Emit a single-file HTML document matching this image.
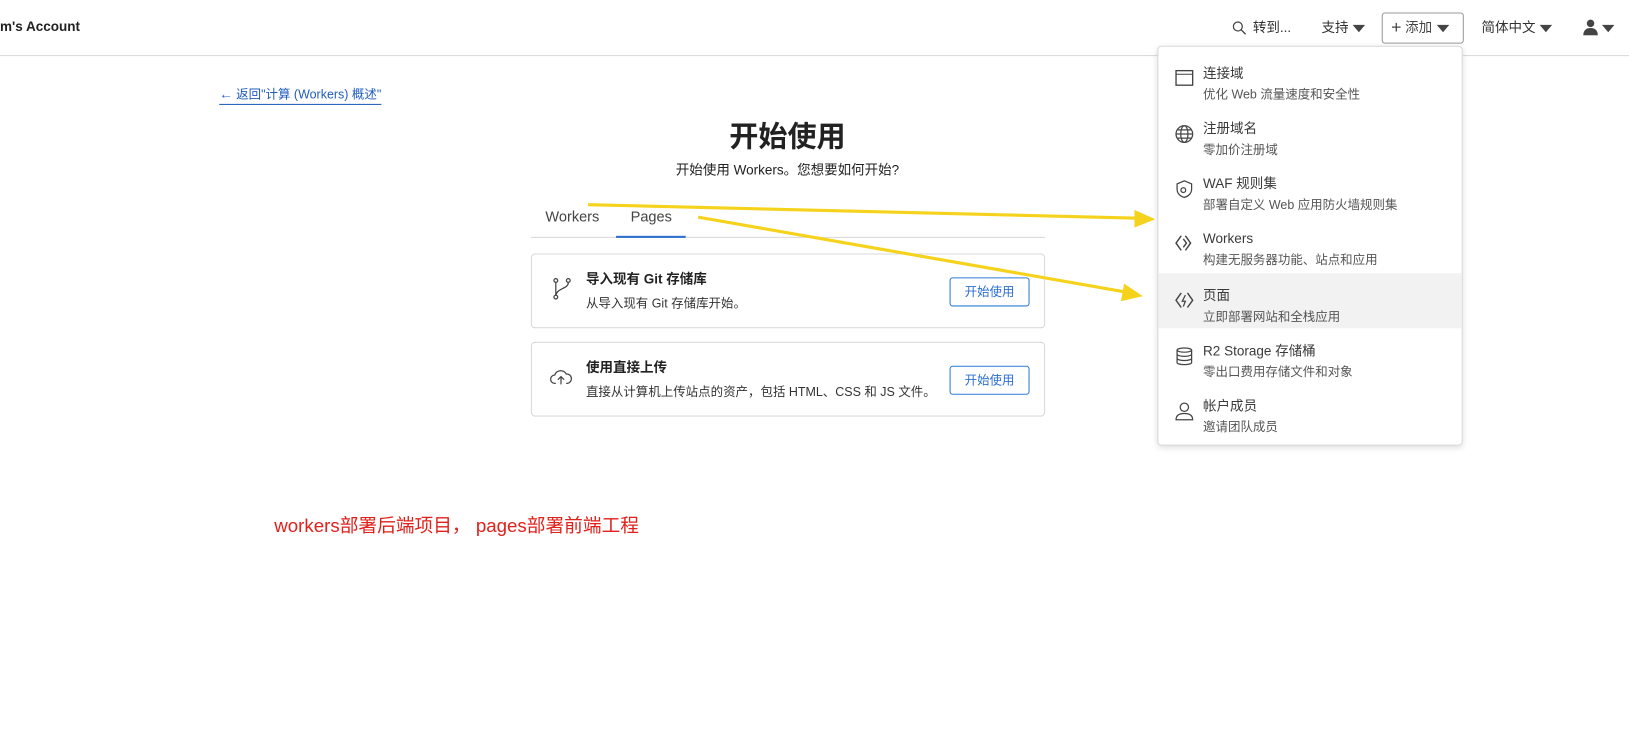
<!DOCTYPE html><html><head><meta charset="utf-8"><style>
*{margin:0;padding:0;box-sizing:border-box}
body{width:1629px;height:730px;background:#fff;font-family:"Liberation Sans","Noto Sans CJK SC",sans-serif;color:#313131;position:relative;overflow:hidden;font-size:13px}
#w{position:absolute;left:0;top:0;width:1568px;height:703px;transform:scale(1.0389);transform-origin:0 0}
.a{position:absolute;white-space:nowrap;line-height:1.2}
.hdr{position:absolute;left:0;top:0;width:1568px;height:54px;border-bottom:1px solid #d9d9d9}
.tri{display:inline-block;width:0;height:0;border-left:6px solid transparent;border-right:6px solid transparent;border-top:7px solid #444;vertical-align:middle;margin-left:4px}
.card{position:absolute;left:511px;width:495px;height:72px;border:1px solid #d9d9d9;border-radius:4px}
.btn{position:absolute;right:14px;top:22px;width:77px;height:28px;border:1px solid #2c7cd6;border-radius:3px;color:#2c6fd1;font-size:12px;text-align:center;line-height:26px}
.dd{position:absolute;left:1114px;top:44px;width:294px;height:385px;border:1px solid #d9d9d9;border-radius:4px;background:#fff;box-shadow:0 2px 6px rgba(0,0,0,.12)}
.it{position:absolute;left:0;width:292px;height:53px}
.it .t{position:absolute;left:43px;top:14px;font-size:13px;color:#3a3a3a;line-height:16px}
.it .s{position:absolute;left:43px;top:35px;font-size:12px;color:#555;line-height:14px}
.it svg{position:absolute;left:16px;top:18px}
</style></head><body><div id="w">
<div class="hdr"></div>
<div class="a" style="left:0;top:18px;font-weight:bold;font-size:13px;color:#222">m's Account</div>
<svg class="a" style="left:1186px;top:20px" width="14" height="14" viewBox="0 0 14 14"><circle cx="5.5" cy="5.5" r="4.3" fill="none" stroke="#444" stroke-width="1.2"/><path d="M8.7 8.7L13 13" stroke="#444" stroke-width="1.3"/></svg>
<div class="a" style="left:1206px;top:19px;font-size:13px">转到...</div>
<div class="a" style="left:1272px;top:19px;font-size:13px">支持<span class="tri"></span></div>
<div class="a" style="left:1330px;top:12px;width:79px;height:30px;border:1px solid #999;border-radius:3px;font-size:13px;line-height:28px;padding-left:8px;color:#444"><span style="font-size:17px;vertical-align:-1px">+</span> 添加<span class="tri"></span></div>
<div class="a" style="left:1426px;top:19px;font-size:13px">简体中文<span class="tri"></span></div>
<svg class="a" style="left:1523px;top:18px" width="16" height="16" viewBox="0 0 16 16"><circle cx="8" cy="4.5" r="3.6" fill="#444"/><path d="M1 16c0-5 3-7 7-7s7 2 7 7z" fill="#444"/></svg>
<span class="tri a" style="left:1538px;top:24px"></span>

<div class="a" style="left:211px;top:83px;font-size:12px;color:#1f5bbf;border-bottom:1px solid #1f5bbf;padding-bottom:1px"><span style="font-size:13px">←</span> 返回"计算 (Workers) 概述"</div>
<div class="a" style="left:0;width:1516px;text-align:center;top:115px;font-size:28px;font-weight:bold;color:#222">开始使用</div>
<div class="a" style="left:0;width:1516px;text-align:center;top:156px;font-size:13px;color:#222">开始使用 Workers。您想要如何开始?</div>
<div class="a" style="left:511px;top:228px;width:495px;height:1px;background:#d9d9d9"></div>
<div class="a" style="left:525px;top:200px;font-size:14px;color:#444">Workers</div>
<div class="a" style="left:607px;top:200px;font-size:14px;color:#444">Pages</div>
<div class="a" style="left:593px;top:227px;width:67px;height:2px;background:#2c6fd1"></div>

<div class="card" style="top:244px">
<svg class="a" style="left:20px;top:22px" width="18" height="22" viewBox="0 0 18 22"><g fill="none" stroke="#444" stroke-width="1.2"><circle cx="3" cy="3" r="1.8"/><circle cx="3" cy="19" r="1.8"/><circle cx="15" cy="3" r="1.8"/><path d="M3 5v12M15 5c0 6-10 5-12 12"/></g></svg>
<div class="a" style="left:52px;top:16px;font-size:13px;font-weight:bold;color:#222">导入现有 Git 存储库</div>
<div class="a" style="left:52px;top:40px;font-size:12px;color:#333">从导入现有 Git 存储库开始。</div>
<div class="btn">开始使用</div></div>
<div class="card" style="top:329px">
<svg class="a" style="left:17px;top:24px" width="22" height="18" viewBox="0 0 22 18"><g fill="none" stroke="#444" stroke-width="1.2"><path d="M6 15H5a4 4 0 0 1 0-8 6 6 0 0 1 11-1 4.5 4.5 0 0 1 1 9h-1"/><path d="M11 16V9M8 11.5l3-3 3 3"/></g></svg>
<div class="a" style="left:52px;top:16px;font-size:13px;font-weight:bold;color:#222">使用直接上传</div>
<div class="a" style="left:52px;top:40px;font-size:12px;color:#333">直接从计算机上传站点的资产，包括 HTML、CSS 和 JS 文件。</div>
<div class="btn">开始使用</div></div>

<div class="dd">
<div class="it" style="top:4px"><svg width="18" height="16" viewBox="0 0 18 16"><rect x="1" y="1" width="16" height="14" fill="none" stroke="#444" stroke-width="1.3"/><path d="M1 4.5h16" stroke="#444"/></svg><div class="t">连接域</div><div class="s">优化 Web 流量速度和安全性</div></div>
<div class="it" style="top:57px"><svg width="18" height="18" viewBox="0 0 18 18"><g fill="none" stroke="#444" stroke-width="1.2"><circle cx="9" cy="9" r="8"/><ellipse cx="9" cy="9" rx="3.5" ry="8"/><path d="M1 9h16M2.5 5h13M2.5 13h13"/></g></svg><div class="t">注册域名</div><div class="s">零加价注册域</div></div>
<div class="it" style="top:110px"><svg width="18" height="18" viewBox="0 0 18 18"><g fill="none" stroke="#444" stroke-width="1.2"><path d="M9 1l7 3v5c0 4-3 7-7 8C5 16 2 13 2 9V4z"/><circle cx="8" cy="10" r="2.3"/></g></svg><div class="t">WAF 规则集</div><div class="s">部署自定义 Web 应用防火墙规则集</div></div>
<div class="it" style="top:163px"><svg width="18" height="16" viewBox="0 0 18 16"><g fill="none" stroke="#444" stroke-width="1.4"><path d="M6 1L1 8l5 7M10 1l5 7-5 7M8 4l3 4-3 4"/></g></svg><div class="t">Workers</div><div class="s">构建无服务器功能、站点和应用</div></div>
<div class="it" style="top:218px;background:#f2f2f2"><svg width="18" height="16" viewBox="0 0 18 16"><g fill="none" stroke="#444" stroke-width="1.4"><path d="M6 1L1 8l5 7M12 1l5 7-5 7"/><path d="M10 3l-3 6h3l-2 5" stroke-width="1.2"/></g></svg><div class="t">页面</div><div class="s">立即部署网站和全栈应用</div></div>
<div class="it" style="top:271px"><svg width="18" height="18" viewBox="0 0 18 18"><g fill="none" stroke="#444" stroke-width="1.2"><ellipse cx="9" cy="3" rx="7" ry="2"/><path d="M2 3v12c0 1 3 2 7 2s7-1 7-2V3M2 7c0 1 3 2 7 2s7-1 7-2M2 11c0 1 3 2 7 2s7-1 7-2"/></g></svg><div class="t">R2 Storage 存储桶</div><div class="s">零出口费用存储文件和对象</div></div>
<div class="it" style="top:324px"><svg width="18" height="18" viewBox="0 0 18 18"><g fill="none" stroke="#444" stroke-width="1.2"><circle cx="9" cy="5" r="4"/><path d="M1 17c0-4 3-6 8-6s8 2 8 6z"/></g></svg><div class="t">帐户成员</div><div class="s">邀请团队成员</div></div>
</div>

<div class="a" style="left:264px;top:496px;font-size:18px;color:#e0201b">workers部署后端项目，  pages部署前端工程</div>

<svg class="a" style="left:0;top:0" width="1568" height="703"><g stroke="#f5d21b" stroke-width="3" fill="#f5d21b"><path d="M566 197L1095 210" fill="none"/><path d="M1112 211L1092 202L1092 219z" stroke="none"/><path d="M672 209L1083 281" fill="none"/><path d="M1100 285L1082 273L1079 290z" stroke="none"/></g></svg>
</div></body></html>
